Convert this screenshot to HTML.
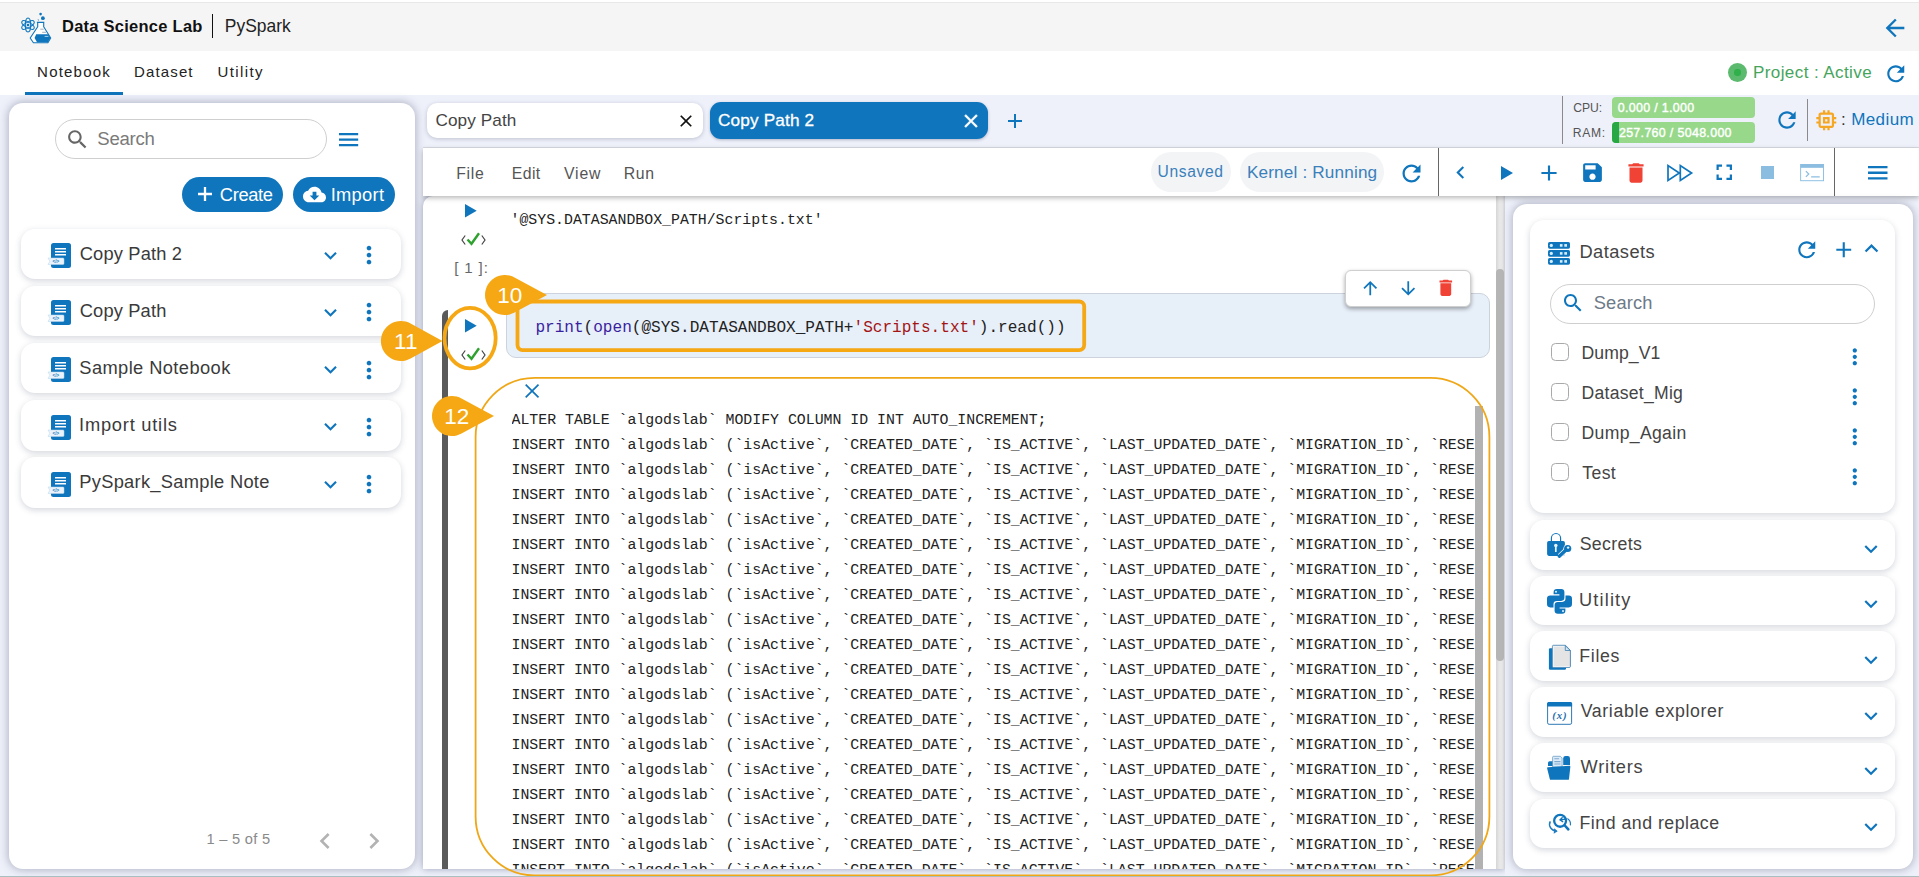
<!DOCTYPE html>
<html lang="en">
<head>
<meta charset="utf-8">
<title>Data Science Lab | PySpark</title>
<style>
*{box-sizing:border-box;margin:0;padding:0}
html,body{width:1919px;height:877px;overflow:hidden}
body{position:relative;background:#eef1fa;font-family:"Liberation Sans",Arial,sans-serif;color:#333;-webkit-font-smoothing:antialiased}
.abs{position:absolute}
.t{position:absolute;white-space:nowrap;line-height:1;transform-origin:0 50%}
svg{position:absolute;display:block;overflow:visible}
.blue{fill:#0f75bc}
/* header */
#hdr{left:0;top:0;width:1919px;height:51px;background:#f5f5f5;border-top:2px solid #fff;box-shadow:inset 0 1px 0 #e8e8e8}
#tabsrow{left:0;top:51px;width:1919px;height:44px;background:#fff}
#tabsrow .ul{left:25px;top:41px;width:98px;height:3px;background:#0f75bc}
/* panels */
.panel{background:#fff;border-radius:14px;box-shadow:0 0 8px 1px rgba(85,90,120,.42)}
#left{left:9px;top:103px;width:406px;height:766px}
.card{position:absolute;background:#fff;border-radius:14px;box-shadow:0 2px 6px rgba(60,70,100,.22)}
.nbcard{left:21px;width:380px;height:50.400px}
.pill{position:absolute;border-radius:20px}
.btn{position:absolute;background:#0f75bc;border-radius:17.500px;height:34.800px}
#bottomstrip{left:0;top:876px;width:1919px;height:1px;background:#a9bfc0}
.nbt{font-size:18.300px;color:#3a3a3a}
.mn{top:166px;font-size:15.200px;color:#555}
.mono{font-family:"Liberation Mono","DejaVu Sans Mono",monospace}
.dsn{font-size:17.500px;color:#444}
.rct{font-size:17.800px;color:#444}
</style>
</head>
<body>
<!-- ===== HEADER ===== -->
<div id="hdr" class="abs"></div>
<div id="tabsrow" class="abs"><div class="abs ul"></div></div>
<svg id="logo" style="left:14px;top:6px" width="44" height="42" viewBox="14 6 44 42">
  <circle cx="28" cy="25" r="5.500" fill="#e6f4ff"/>
  <g fill="none" stroke="#0f75bc" stroke-width="1.050">
    <ellipse cx="28" cy="25" rx="7" ry="2.700" transform="rotate(90 28 25)"/>
    <ellipse cx="28" cy="25" rx="7" ry="2.700" transform="rotate(30 28 25)"/>
    <ellipse cx="28" cy="25" rx="7" ry="2.700" transform="rotate(-30 28 25)"/>
  </g>
  <circle cx="28" cy="25" r="1.300" class="blue"/>
  <path d="M36.900 22.400h7.400M37.700 22.400v4.400L30.200 38l3.200 4.700h14.500L50.700 38 43.700 26.800v-4.400" fill="#fff" stroke="#0f75bc" stroke-width="1.100" stroke-linejoin="round"/>
  <path d="M36.200 34.300h12.100L50.400 38l-2.600 4.200H37L34.600 38z" class="blue"/>
  <path d="M40.300 29.200h3.400M42.200 32.300h3.800" stroke="#7b8c99" stroke-width=".7"/><path d="M44.600 36.400h3.800" stroke="#cfe6f7" stroke-width=".8"/>
  <circle cx="40.600" cy="14.100" r="1.300" class="blue"/><circle cx="42.900" cy="18.200" r="1.900" class="blue"/><path d="M37.800 19.600l1.200.7" stroke="#0f75bc" stroke-width=".8"/>
</svg>
<span class="t" id="t_dsl" style="left:62.00px;top:17.65px;font-size:16.48px;font-weight:700;color:#111;letter-spacing:0.266px">Data Science Lab</span>
<div class="abs" style="left:212px;top:14px;width:1.100px;height:23.500px;background:#111"></div>
<span class="t" id="t_pys" style="left:224.76px;top:18.12px;font-size:17.46px;color:#222;letter-spacing:0.017px">PySpark</span>
<svg style="left:1881.300px;top:14.300px" width="28" height="28" viewBox="0 0 24 24"><path class="blue" d="M20 11H7.830l5.590-5.590L12 4l-8 8 8 8 1.410-1.410L7.830 13H20v-2z"/></svg>

<span class="t" id="t_nb" style="left:37.10px;top:64.00px;font-size:15.0px;color:#222;letter-spacing:1.209px">Notebook</span>
<span class="t" id="t_ds" style="left:134.10px;top:64.00px;font-size:15.0px;color:#222;letter-spacing:1.121px">Dataset</span>
<span class="t" id="t_ut" style="left:217.62px;top:64.00px;font-size:15.0px;color:#222;letter-spacing:1.375px">Utility</span>
<div class="abs" style="left:1728.100px;top:62.800px;width:19px;height:19px;border-radius:50%;background:#5cba6e"></div>
<div class="abs" style="left:1734.300px;top:69px;width:6.600px;height:6.600px;border-radius:50%;background:#2fb04a"></div>
<span class="t" id="t_proj" style="left:1752.97px;top:64.38px;font-size:17.04px;color:#45a55c;letter-spacing:0.404px">Project : Active</span>
<svg style="left:1883.250px;top:60.850px" width="25.500" height="25.500" viewBox="0 0 24 24"><path class="blue" d="M17.650 6.350C16.200 4.900 14.210 4 12 4c-4.420 0-7.990 3.580-7.990 8s3.570 8 7.990 8c3.730 0 6.840-2.550 7.730-6h-2.080c-.820 2.330-3.040 4-5.650 4-3.310 0-6-2.690-6-6s2.690-6 6-6c1.660 0 3.140.690 4.220 1.780L13 11h7V4l-2.350 2.350z"/></svg>

<!-- ===== LEFT PANEL ===== -->
<div id="left" class="abs panel"></div>
<div class="pill" style="left:55px;top:119px;width:272px;height:40px;border:1px solid #cfcfcf;background:#fff"></div>
<svg style="left:65px;top:127px" width="25" height="25" viewBox="0 0 24 24"><path fill="#666" d="M15.500 14h-.790l-.280-.270C15.410 12.590 16 11.110 16 9.500 16 5.910 13.090 3 9.500 3S3 5.910 3 9.500 5.910 16 9.500 16c1.610 0 3.090-.590 4.230-1.570l.270.280v.790l5 4.990L20.490 19l-4.990-5zm-6 0C7.010 14 5 11.990 5 9.500S7.010 5 9.500 5 14 7.010 14 9.500 11.990 14 9.500 14z"/></svg>
<span class="t" id="t_srch" style="left:97.32px;top:130.27px;font-size:18.58px;color:#7a7a7a;letter-spacing:-0.281px">Search</span>
<svg style="left:338.500px;top:132.800px" width="19.200" height="13.200" viewBox="0 0 19.200 13.200"><path class="blue" d="M0 0h19.200v2.300H0zM0 5.450h19.200v2.300H0zM0 10.900h19.200v2.300H0z"/></svg>
<div class="btn" style="left:182px;top:177px;width:101px"></div>
<svg style="left:192.600px;top:181.700px" width="24" height="24" viewBox="0 0 24 24"><path fill="#fff" d="M19 13.150h-5.850V19h-2.300v-5.850H5v-2.300h5.850V5h2.300v5.850H19z"/></svg>
<span class="t" id="t_create" style="left:219.76px;top:186.31px;font-size:18.3px;color:#fff;letter-spacing:-0.316px">Create</span>
<div class="btn" style="left:293px;top:177px;width:101.800px"></div>
<svg style="left:303px;top:183px" width="23" height="23" viewBox="0 0 24 24"><path fill="#fff" d="M19.350 10.040C18.670 6.590 15.640 4 12 4 9.110 4 6.600 5.640 5.350 8.040 2.340 8.360 0 10.910 0 14c0 3.310 2.690 6 6 6h13c2.760 0 5-2.240 5-5 0-2.640-2.050-4.780-4.650-4.960zM17 13l-5 5-5-5h3V9h4v4h3z"/></svg>
<span class="t" id="t_import" style="left:330.73px;top:186.31px;font-size:18.3px;color:#fff;letter-spacing:0.291px">Import</span>
<div class="card nbcard" style="top:228.70px"></div>
<svg style="left:48px;top:243.10px" width="24" height="26" viewBox="0 0 24 26"><rect x="3" y="0" width="20" height="25" rx="2.500" class="blue"/><path d="M7 5.800h11M7 8.800h11M7 11.800h11" stroke="#fff" stroke-width="1.600"/><path d="M0 15h15a1 1 0 0 1 1 1v4.500a1 1 0 0 1-1 1H0l1.800-3.250z" fill="#eaf3fb" stroke="#b9d6ee" stroke-width=".5"/><text x="4.500" y="20.300" font-family="Liberation Sans, sans-serif" font-size="4.500" font-weight="700" fill="#0f75bc">&lt;/&gt;</text></svg>
<span id="a1" class="t nbt" style="left:79.74px;top:245.41px;font-size:18.3px;letter-spacing:0.159px">Copy Path 2</span>
<svg style="left:318.100px;top:242.90px" width="25" height="25" viewBox="0 0 24 24"><path class="blue" d="M16.590 8.590L12 13.170 7.410 8.590 6 10l6 6 6-6z"/></svg>
<svg style="left:354.800px;top:241.20px" width="28" height="28" viewBox="0 0 24 24"><path class="blue" d="M12 8c1.100 0 2-.900 2-2s-.900-2-2-2-2 .900-2 2 .900 2 2 2zm0 2c-1.100 0-2 .900-2 2s.900 2 2 2 2-.900 2-2-.900-2-2-2zm0 6c-1.100 0-2 .900-2 2s.900 2 2 2 2-.900 2-2-.900-2-2-2z"/></svg>
<div class="card nbcard" style="top:285.85px"></div>
<svg style="left:48px;top:300.25px" width="24" height="26" viewBox="0 0 24 26"><rect x="3" y="0" width="20" height="25" rx="2.500" class="blue"/><path d="M7 5.800h11M7 8.800h11M7 11.800h11" stroke="#fff" stroke-width="1.600"/><path d="M0 15h15a1 1 0 0 1 1 1v4.500a1 1 0 0 1-1 1H0l1.800-3.250z" fill="#eaf3fb" stroke="#b9d6ee" stroke-width=".5"/><text x="4.500" y="20.300" font-family="Liberation Sans, sans-serif" font-size="4.500" font-weight="700" fill="#0f75bc">&lt;/&gt;</text></svg>
<span id="a2" class="t nbt" style="left:79.74px;top:302.41px;font-size:18.3px;letter-spacing:0.156px">Copy Path</span>
<svg style="left:318.100px;top:300.05px" width="25" height="25" viewBox="0 0 24 24"><path class="blue" d="M16.590 8.590L12 13.170 7.410 8.590 6 10l6 6 6-6z"/></svg>
<svg style="left:354.800px;top:298.35px" width="28" height="28" viewBox="0 0 24 24"><path class="blue" d="M12 8c1.100 0 2-.900 2-2s-.900-2-2-2-2 .900-2 2 .900 2 2 2zm0 2c-1.100 0-2 .900-2 2s.900 2 2 2 2-.900 2-2-.900-2-2-2zm0 6c-1.100 0-2 .900-2 2s.900 2 2 2 2-.900 2-2-.900-2-2-2z"/></svg>
<div class="card nbcard" style="top:343.00px"></div>
<svg style="left:48px;top:357.40px" width="24" height="26" viewBox="0 0 24 26"><rect x="3" y="0" width="20" height="25" rx="2.500" class="blue"/><path d="M7 5.800h11M7 8.800h11M7 11.800h11" stroke="#fff" stroke-width="1.600"/><path d="M0 15h15a1 1 0 0 1 1 1v4.500a1 1 0 0 1-1 1H0l1.800-3.250z" fill="#eaf3fb" stroke="#b9d6ee" stroke-width=".5"/><text x="4.500" y="20.300" font-family="Liberation Sans, sans-serif" font-size="4.500" font-weight="700" fill="#0f75bc">&lt;/&gt;</text></svg>
<span id="a3" class="t nbt" style="left:79.29px;top:359.41px;font-size:18.3px;letter-spacing:0.405px">Sample Notebook</span>
<svg style="left:318.100px;top:357.20px" width="25" height="25" viewBox="0 0 24 24"><path class="blue" d="M16.590 8.590L12 13.170 7.410 8.590 6 10l6 6 6-6z"/></svg>
<svg style="left:354.800px;top:355.50px" width="28" height="28" viewBox="0 0 24 24"><path class="blue" d="M12 8c1.100 0 2-.900 2-2s-.900-2-2-2-2 .900-2 2 .900 2 2 2zm0 2c-1.100 0-2 .900-2 2s.900 2 2 2 2-.900 2-2-.900-2-2-2zm0 6c-1.100 0-2 .900-2 2s.900 2 2 2 2-.900 2-2-.900-2-2-2z"/></svg>
<div class="card nbcard" style="top:400.15px"></div>
<svg style="left:48px;top:414.55px" width="24" height="26" viewBox="0 0 24 26"><rect x="3" y="0" width="20" height="25" rx="2.500" class="blue"/><path d="M7 5.800h11M7 8.800h11M7 11.800h11" stroke="#fff" stroke-width="1.600"/><path d="M0 15h15a1 1 0 0 1 1 1v4.500a1 1 0 0 1-1 1H0l1.800-3.250z" fill="#eaf3fb" stroke="#b9d6ee" stroke-width=".5"/><text x="4.500" y="20.300" font-family="Liberation Sans, sans-serif" font-size="4.500" font-weight="700" fill="#0f75bc">&lt;/&gt;</text></svg>
<span id="a4" class="t nbt" style="left:79.12px;top:416.41px;font-size:18.3px;letter-spacing:0.761px">Import utils</span>
<svg style="left:318.100px;top:414.35px" width="25" height="25" viewBox="0 0 24 24"><path class="blue" d="M16.590 8.590L12 13.170 7.410 8.590 6 10l6 6 6-6z"/></svg>
<svg style="left:354.800px;top:412.65px" width="28" height="28" viewBox="0 0 24 24"><path class="blue" d="M12 8c1.100 0 2-.900 2-2s-.900-2-2-2-2 .900-2 2 .900 2 2 2zm0 2c-1.100 0-2 .900-2 2s.900 2 2 2 2-.900 2-2-.900-2-2-2zm0 6c-1.100 0-2 .900-2 2s.900 2 2 2 2-.900 2-2-.900-2-2-2z"/></svg>
<div class="card nbcard" style="top:457.30px"></div>
<svg style="left:48px;top:471.70px" width="24" height="26" viewBox="0 0 24 26"><rect x="3" y="0" width="20" height="25" rx="2.500" class="blue"/><path d="M7 5.800h11M7 8.800h11M7 11.800h11" stroke="#fff" stroke-width="1.600"/><path d="M0 15h15a1 1 0 0 1 1 1v4.500a1 1 0 0 1-1 1H0l1.800-3.250z" fill="#eaf3fb" stroke="#b9d6ee" stroke-width=".5"/><text x="4.500" y="20.300" font-family="Liberation Sans, sans-serif" font-size="4.500" font-weight="700" fill="#0f75bc">&lt;/&gt;</text></svg>
<span id="a5" class="t nbt" style="left:79.26px;top:473.41px;font-size:18.3px;letter-spacing:0.289px">PySpark_Sample Note</span>
<svg style="left:318.100px;top:471.50px" width="25" height="25" viewBox="0 0 24 24"><path class="blue" d="M16.590 8.590L12 13.170 7.410 8.590 6 10l6 6 6-6z"/></svg>
<svg style="left:354.800px;top:469.80px" width="28" height="28" viewBox="0 0 24 24"><path class="blue" d="M12 8c1.100 0 2-.900 2-2s-.900-2-2-2-2 .900-2 2 .900 2 2 2zm0 2c-1.100 0-2 .900-2 2s.900 2 2 2 2-.900 2-2-.900-2-2-2zm0 6c-1.100 0-2 .900-2 2s.900 2 2 2 2-.900 2-2-.900-2-2-2z"/></svg>
<span class="t" id="t_pag" style="left:206.53px;top:831.84px;font-size:14.66px;color:#8a8a8a;letter-spacing:0.272px">1 – 5 of 5</span>
<svg style="left:308.600px;top:825.200px" width="32" height="32" viewBox="0 0 24 24"><path fill="#b3b3b3" d="M15.410 7.410L14 6l-6 6 6 6 1.410-1.410L10.830 12z"/></svg>
<svg style="left:358.400px;top:825.200px" width="32" height="32" viewBox="0 0 24 24"><path fill="#b3b3b3" d="M10 6L8.590 7.410 13.170 12l-4.580 4.590L10 18l6-6z"/></svg>

<!-- ===== CENTER: file tabs ===== -->
<div class="abs" style="left:427px;top:103px;width:276px;height:35px;background:#fff;border-radius:10px;box-shadow:0 1px 4px rgba(60,70,100,.28)"></div>
<span class="t" id="t_tab1" style="left:435.49px;top:112.46px;font-size:17.18px;color:#444;letter-spacing:0.086px">Copy Path</span>
<svg style="left:676px;top:110.500px" width="20" height="20" viewBox="0 0 24 24"><path fill="#111" d="M19 6.410L17.590 5 12 10.590 6.410 5 5 6.410 10.590 12 5 17.590 6.410 19 12 13.410 17.590 19 19 17.590 13.410 12z"/></svg>
<div class="abs" style="left:710px;top:102px;width:278px;height:37px;background:#0f75bc;border-radius:11px;box-shadow:0 1px 3px rgba(30,40,80,.3)"></div>
<span class="t" id="t_tab2" style="left:717.94px;top:112.46px;font-size:17.18px;color:#fff;letter-spacing:0.170px;-webkit-text-stroke:.3px #fff">Copy Path 2</span>
<svg style="left:959.500px;top:110px" width="22" height="22" viewBox="0 0 24 24"><path fill="#fff" stroke="#fff" stroke-width=".6" d="M19 6.410L17.590 5 12 10.590 6.410 5 5 6.410 10.590 12 5 17.590 6.410 19 12 13.410 17.590 19 19 17.590 13.410 12z"/></svg>
<svg style="left:1002.500px;top:109px" width="24" height="24" viewBox="0 0 24 24"><path class="blue" d="M19 13h-6v6h-2v-6H5v-2h6V5h2v6h6v2z"/></svg>
<!-- resources -->
<div class="abs" style="left:1562px;top:96px;width:1px;height:48px;background:#8a8a8a"></div>
<span class="t" id="t_cpu" style="left:1573.21px;top:101.82px;font-size:12.15px;color:#555;letter-spacing:-0.018px">CPU:</span>
<span class="t" id="t_ram" style="left:1572.69px;top:126.62px;font-size:12.15px;color:#555;letter-spacing:0.721px">RAM:</span>
<div class="abs" style="left:1612px;top:97px;width:143px;height:21px;border-radius:4px;background:#98d88b"></div>
<div class="abs" style="left:1612px;top:122px;width:143px;height:21px;border-radius:4px;background:#98d88b;overflow:hidden"><div style="width:7px;height:21px;background:#28a745"></div></div>
<span class="t" id="t_cpuv" style="left:1617.76px;top:101.58px;font-size:12.43px;color:#fff;font-weight:400;-webkit-text-stroke:.4px #fff;letter-spacing:0.328px">0.000 / 1.000</span>
<span class="t" id="t_ramv" style="left:1618.90px;top:127.38px;font-size:12.43px;color:#fff;font-weight:400;-webkit-text-stroke:.4px #fff;letter-spacing:0.328px">257.760 / 5048.000</span>
<svg style="left:1773.600px;top:107.300px" width="26" height="26" viewBox="0 0 24 24"><path class="blue" d="M17.650 6.350C16.200 4.900 14.210 4 12 4c-4.420 0-7.990 3.580-7.990 8s3.570 8 7.990 8c3.730 0 6.840-2.550 7.730-6h-2.080c-.820 2.330-3.040 4-5.650 4-3.310 0-6-2.690-6-6s2.690-6 6-6c1.660 0 3.140.690 4.220 1.780L13 11h7V4l-2.350 2.350z"/></svg>
<div class="abs" style="left:1807px;top:99px;width:1px;height:42px;background:#8a8a8a"></div>
<svg style="left:1813px;top:106.800px" width="26.600" height="26.600" viewBox="0 0 24 24"><path fill="#f5a623" d="M15 9H9v6h6V9zm-2 4h-2v-2h2v2zm8-2V9h-2V7c0-1.100-.900-2-2-2h-2V3h-2v2h-2V3H9v2H7c-1.100 0-2 .900-2 2v2H3v2h2v2H3v2h2v2c0 1.100.900 2 2 2h2v2h2v-2h2v2h2v-2h2c1.100 0 2-.900 2-2v-2h2v-2h-2v-2h2zm-4 6H7V7h10v10z"/></svg>
<span class="t" id="t_med" style="left:1840.96px;top:111.08px;font-size:17.04px;color:#0f75bc;letter-spacing:0.382px"><span style="color:#333">:</span> Medium</span>
<!-- toolbar -->
<div class="abs" style="left:405px;top:180px;width:1099.500px;height:697px;overflow:hidden"><div class="abs" id="nbarea" style="left:18px;top:16px;width:1081.500px;height:673px;background:#fff;border-radius:10px 0 0 0;box-shadow:0 0 7px rgba(70,80,120,.5)"></div></div>
<div class="abs" style="left:1496px;top:196px;width:8.500px;height:673px;background:linear-gradient(90deg,#d6d6d6,#e8e8e8 40%,#e6e6e6 70%,#cfd0d6)"></div>
<div class="abs" style="left:1496px;top:269px;width:7.700px;height:391.500px;background:#b5b5b5;border-radius:4px"></div>
<div class="abs" id="toolbar" style="left:423px;top:148px;width:1496px;height:48px;background:#fff;box-shadow:0 2px 5px rgba(0,0,0,.28),0 -1px 0 #d8dbe2"></div>
<span id="a6" class="t mn" style="left:456.23px;font-size:15.8px;top:165.83px;letter-spacing:0.696px">File</span>
<span id="a7" class="t mn" style="left:511.77px;font-size:15.8px;top:165.83px;letter-spacing:0.418px">Edit</span>
<span id="a8" class="t mn" style="left:564.00px;font-size:15.8px;top:165.83px;letter-spacing:0.849px">View</span>
<span id="a9" class="t mn" style="left:623.77px;font-size:15.8px;top:165.83px;letter-spacing:0.656px">Run</span>
<div class="pill" style="left:1150.500px;top:152px;width:80px;height:40px;background:#f3f4f6"></div>
<span class="t" id="t_uns" style="left:1157.58px;top:163.76px;font-size:15.64px;color:#3a80bb;letter-spacing:0.614px">Unsaved</span>
<div class="pill" style="left:1239.500px;top:152px;width:144px;height:40px;background:#f3f4f6"></div>
<span class="t" id="t_ker" style="left:1246.91px;top:164.26px;font-size:17.18px;color:#3a80bb;letter-spacing:0.155px">Kernel : Running</span>
<svg style="left:1398px;top:160px" width="27" height="27" viewBox="0 0 24 24"><path class="blue" d="M17.650 6.350C16.200 4.900 14.210 4 12 4c-4.420 0-7.990 3.580-7.990 8s3.570 8 7.990 8c3.730 0 6.840-2.550 7.730-6h-2.080c-.820 2.330-3.040 4-5.650 4-3.310 0-6-2.690-6-6s2.690-6 6-6c1.660 0 3.140.690 4.220 1.780L13 11h7V4l-2.350 2.350z"/></svg>
<div class="abs" style="left:1438px;top:148px;width:1px;height:48px;background:#666"></div>
<svg style="left:1448px;top:160px" width="25" height="25" viewBox="0 0 24 24"><path class="blue" d="M15.410 7.410L14 6l-6 6 6 6 1.410-1.410L10.830 12z"/></svg>
<svg style="left:1500.700px;top:165.500px" width="12" height="14" viewBox="0 0 12 14"><path class="blue" d="M0 0v14l12-7z"/></svg>
<svg style="left:1535.500px;top:159.500px" width="26" height="26" viewBox="0 0 24 24"><path class="blue" d="M19 13h-6v6h-2v-6H5v-2h6V5h2v6h6v2z"/></svg>
<svg style="left:1580px;top:160px" width="25" height="25" viewBox="0 0 24 24"><path class="blue" d="M17 3H5c-1.110 0-2 .900-2 2v14c0 1.100.890 2 2 2h14c1.100 0 2-.900 2-2V7l-4-4zm-5 16c-1.660 0-3-1.340-3-3s1.340-3 3-3 3 1.340 3 3-1.340 3-3 3zm3-10H5V5h10v4z"/></svg>
<svg style="left:1623px;top:159.500px" width="26" height="26" viewBox="0 0 24 24"><path fill="#f04235" d="M6 19c0 1.100.900 2 2 2h8c1.100 0 2-.900 2-2V7H6v12zM19 4h-3.500l-1-1h-5l-1 1H5v2h14V4z"/></svg>
<svg style="left:1667px;top:163.500px" width="26" height="18" viewBox="0 0 26 18"><path d="M1 1.600v14.800l11.300-7.400zM13.300 1.600v14.800l11.300-7.400z" fill="none" stroke="#0f75bc" stroke-width="1.700" stroke-linejoin="miter"/></svg>
<svg style="left:1710.500px;top:159.200px" width="26.500" height="26.500" viewBox="0 0 24 24"><path class="blue" d="M7 14H5v5h5v-2H7v-3zm-2-4h2V7h3V5H5v5zm12 7h-3v2h5v-5h-2v3zM14 5v2h3v3h2V5h-5z"/></svg>
<div class="abs" style="left:1761px;top:166px;width:13px;height:13px;background:#8bbde1"></div>
<svg style="left:1799.500px;top:163.700px" width="24.200" height="17.200" viewBox="0 0 25 18"><rect x=".5" y=".5" width="24" height="17" fill="#fff" stroke="#8bbde1"/><rect x=".5" y=".5" width="24" height="3.500" fill="#8bbde1"/><path d="M6 7.500l3 3-3 3M11.500 13.500h9" fill="none" stroke="#8bbde1" stroke-width="1.300"/></svg>
<div class="abs" style="left:1833.500px;top:148px;width:1px;height:48px;background:#666"></div>
<svg style="left:1867.700px;top:166px" width="19.500" height="13.500" viewBox="0 0 19.500 13.500"><path class="blue" d="M0 0h19.500v2.300H0zM0 5.600h19.500v2.300H0zM0 11.200h19.500v2.300H0z"/></svg>
<!-- ===== CELLS ===== -->
<svg style="left:465.300px;top:204px" width="12" height="14" viewBox="0 0 12 14"><path class="blue" d="M0 0v13.500l11.700-6.750z"/></svg>
<svg style="left:460.5px;top:232px" width="25" height="14" viewBox="0 0 25 14"><path d="M4.200 3.500L1 8l3.200 4.500M20.800 3.500L24 8l-3.200 4.500" fill="none" stroke="#444" stroke-width="1.200"/><path d="M6.500 7.500l4 4.300L18 1.200" fill="none" stroke="#2ea12e" stroke-width="2.400"/></svg>
<span class="t mono" id="t_out1" style="left:510.500px;top:213.200px;font-size:14.862px;color:#222">'@SYS.DATASANDBOX_PATH/Scripts.txt'</span>
<span class="t" id="t_in1" style="left:454.15px;top:259.53px;font-size:15.08px;color:#666;letter-spacing:0.870px">[ 1 ]:</span>
<div class="abs" style="left:442px;top:310px;width:6px;height:559px;background:#5a5a5a;border-radius:6px 0 0 0"></div>
<div class="abs" style="left:505.500px;top:292.500px;width:984px;height:65.500px;background:#e7eff9;border:1px solid #cdd3dc;border-radius:10px"></div>
<svg style="left:510px;top:295px" width="582" height="62" viewBox="510 295 582 62"><rect x="517.500" y="301.500" width="566.700" height="48.600" rx="5" fill="none" stroke="#f5a814" stroke-width="3.800"/></svg>
<span class="t mono" id="t_code" style="left:535.400px;top:320.200px;font-size:16.070px;color:#222"><span style="color:#3a1f9e">print</span>(<span style="color:#3a1f9e">open</span>(@SYS.DATASANDBOX_PATH+<span style="color:#a31515">'Scripts.txt'</span>).read())</span>
<svg style="left:465px;top:318.700px" width="12" height="14" viewBox="0 0 12 14"><path class="blue" d="M0 0v13.500l11.700-6.750z"/></svg>
<svg style="left:460.5px;top:347px" width="25" height="14" viewBox="0 0 25 14"><path d="M4.200 3.500L1 8l3.200 4.500M20.800 3.500L24 8l-3.200 4.500" fill="none" stroke="#444" stroke-width="1.200"/><path d="M6.500 7.500l4 4.300L18 1.200" fill="none" stroke="#2ea12e" stroke-width="2.400"/></svg>
<svg style="left:440px;top:302px" width="62" height="74" viewBox="440 302 62 74"><ellipse cx="470.100" cy="338.100" rx="25.600" ry="30.200" fill="none" stroke="#f5a814" stroke-width="3.800"/></svg>
<div class="abs" style="left:1344.500px;top:270px;width:126px;height:36.500px;background:#fff;border:1px solid #cfcfcf;border-radius:6px;box-shadow:0 2px 4px rgba(0,0,0,.35)"></div>
<svg style="left:1363px;top:280.500px" width="14.500" height="14.500" viewBox="0 0 14 14"><path d="M7 13.800V1.200M1 7.200l6-6 6 6" fill="none" stroke="#0f75bc" stroke-width="1.700"/></svg>
<svg style="left:1400.500px;top:280.500px" width="14.500" height="14.500" viewBox="0 0 14 14"><path d="M7 .2v12.600M1 6.800l6 6 6-6" fill="none" stroke="#0f75bc" stroke-width="1.700"/></svg>
<svg style="left:1434.600px;top:276.500px" width="21.600" height="21.600" viewBox="0 0 24 24"><path fill="#f04235" d="M6 19c0 1.100.900 2 2 2h8c1.100 0 2-.900 2-2V7H6v12zM19 4h-3.500l-1-1h-5l-1 1H5v2h14V4z"/></svg>
<div class="abs mono" id="outbox" style="left:511.500px;top:408px;width:963.300px;height:461px;overflow:hidden;font-size:14.862px;line-height:25px;color:#222;white-space:pre">ALTER TABLE `algodslab` MODIFY COLUMN ID INT AUTO_INCREMENT;
INSERT INTO `algodslab` (`isActive`, `CREATED_DATE`, `IS_ACTIVE`, `LAST_UPDATED_DATE`, `MIGRATION_ID`, `RESERVED`
INSERT INTO `algodslab` (`isActive`, `CREATED_DATE`, `IS_ACTIVE`, `LAST_UPDATED_DATE`, `MIGRATION_ID`, `RESERVED`
INSERT INTO `algodslab` (`isActive`, `CREATED_DATE`, `IS_ACTIVE`, `LAST_UPDATED_DATE`, `MIGRATION_ID`, `RESERVED`
INSERT INTO `algodslab` (`isActive`, `CREATED_DATE`, `IS_ACTIVE`, `LAST_UPDATED_DATE`, `MIGRATION_ID`, `RESERVED`
INSERT INTO `algodslab` (`isActive`, `CREATED_DATE`, `IS_ACTIVE`, `LAST_UPDATED_DATE`, `MIGRATION_ID`, `RESERVED`
INSERT INTO `algodslab` (`isActive`, `CREATED_DATE`, `IS_ACTIVE`, `LAST_UPDATED_DATE`, `MIGRATION_ID`, `RESERVED`
INSERT INTO `algodslab` (`isActive`, `CREATED_DATE`, `IS_ACTIVE`, `LAST_UPDATED_DATE`, `MIGRATION_ID`, `RESERVED`
INSERT INTO `algodslab` (`isActive`, `CREATED_DATE`, `IS_ACTIVE`, `LAST_UPDATED_DATE`, `MIGRATION_ID`, `RESERVED`
INSERT INTO `algodslab` (`isActive`, `CREATED_DATE`, `IS_ACTIVE`, `LAST_UPDATED_DATE`, `MIGRATION_ID`, `RESERVED`
INSERT INTO `algodslab` (`isActive`, `CREATED_DATE`, `IS_ACTIVE`, `LAST_UPDATED_DATE`, `MIGRATION_ID`, `RESERVED`
INSERT INTO `algodslab` (`isActive`, `CREATED_DATE`, `IS_ACTIVE`, `LAST_UPDATED_DATE`, `MIGRATION_ID`, `RESERVED`
INSERT INTO `algodslab` (`isActive`, `CREATED_DATE`, `IS_ACTIVE`, `LAST_UPDATED_DATE`, `MIGRATION_ID`, `RESERVED`
INSERT INTO `algodslab` (`isActive`, `CREATED_DATE`, `IS_ACTIVE`, `LAST_UPDATED_DATE`, `MIGRATION_ID`, `RESERVED`
INSERT INTO `algodslab` (`isActive`, `CREATED_DATE`, `IS_ACTIVE`, `LAST_UPDATED_DATE`, `MIGRATION_ID`, `RESERVED`
INSERT INTO `algodslab` (`isActive`, `CREATED_DATE`, `IS_ACTIVE`, `LAST_UPDATED_DATE`, `MIGRATION_ID`, `RESERVED`
INSERT INTO `algodslab` (`isActive`, `CREATED_DATE`, `IS_ACTIVE`, `LAST_UPDATED_DATE`, `MIGRATION_ID`, `RESERVED`
INSERT INTO `algodslab` (`isActive`, `CREATED_DATE`, `IS_ACTIVE`, `LAST_UPDATED_DATE`, `MIGRATION_ID`, `RESERVED`
INSERT INTO `algodslab` (`isActive`, `CREATED_DATE`, `IS_ACTIVE`, `LAST_UPDATED_DATE`, `MIGRATION_ID`, `RESERVED`</div>
<div class="abs" style="left:1475px;top:405.500px;width:7.700px;height:463.500px;background:#b2b2b2"></div>
<svg style="left:524.500px;top:383.500px" width="14.200" height="14" viewBox="0 0 14 14"><path d="M.6.600l12.800 12.800M13.400.600L.6 13.400" fill="none" stroke="#0f75bc" stroke-width="1.700"/></svg>
<svg style="left:470px;top:372px" width="1026" height="505" viewBox="470 372 1026 505"><rect x="475.600" y="377.900" width="1013.800" height="497.500" rx="59" fill="none" stroke="#efa718" stroke-width="1.800"/></svg>
<svg style="left:0;top:0" width="1919" height="877" viewBox="0 0 1919 877"><path fill="#f5a814" d="M547 295L514.5 277.4A20 20 0 1 0 514.5 312.6Z"/><text x="509.8" y="303.1" text-anchor="middle" font-family="Liberation Sans, Arial, sans-serif" font-size="22.500" fill="#fff">10</text></svg>
<svg style="left:0;top:0" width="1919" height="877" viewBox="0 0 1919 877"><path fill="#f5a814" d="M442.5 341L410.6 323.5A20 20 0 1 0 410.6 358.5Z"/><text x="405.8" y="349.1" text-anchor="middle" font-family="Liberation Sans, Arial, sans-serif" font-size="22.500" fill="#fff">11</text></svg>
<svg style="left:0;top:0" width="1919" height="877" viewBox="0 0 1919 877"><path fill="#f5a814" d="M494 416L461.5 398.4A20 20 0 1 0 461.5 433.6Z"/><text x="456.8" y="424.1" text-anchor="middle" font-family="Liberation Sans, Arial, sans-serif" font-size="22.500" fill="#fff">12</text></svg>


<!-- ===== RIGHT PANEL ===== -->
<div class="abs panel" style="left:1513px;top:204px;width:400px;height:665px"></div>
<div class="card" style="left:1530px;top:220px;width:365px;height:293px"></div>
<svg style="left:1548px;top:242px" width="22" height="23" viewBox="0 0 22 23"><g class="blue"><rect x="0" y="0" width="22" height="6.700" rx="1.600"/><rect x="0" y="8" width="22" height="6.700" rx="1.600"/><rect x="0" y="16" width="22" height="6.700" rx="1.600"/></g><g fill="#d9efff"><circle cx="3.300" cy="3.4" r="1.600"/><rect x="11.900" y="2.1" width="2.600" height="2.600"/><rect x="16.300" y="2.1" width="2.700" height="2.600"/><circle cx="3.300" cy="11.4" r="1.600"/><rect x="11.900" y="10.1" width="2.600" height="2.600"/><rect x="16.300" y="10.1" width="2.700" height="2.600"/><circle cx="3.300" cy="19.4" r="1.600"/><rect x="11.900" y="18.1" width="2.600" height="2.600"/><rect x="16.300" y="18.1" width="2.700" height="2.600"/></g></svg>
<span class="t" id="t_dsets" style="left:1579.38px;top:242.71px;font-size:18.3px;color:#444;letter-spacing:0.450px">Datasets</span>
<svg style="left:1794px;top:236.500px" width="25.500" height="25.500" viewBox="0 0 24 24"><path class="blue" d="M17.650 6.350C16.200 4.900 14.210 4 12 4c-4.420 0-7.990 3.580-7.990 8s3.570 8 7.990 8c3.730 0 6.840-2.550 7.730-6h-2.080c-.820 2.330-3.040 4-5.650 4-3.310 0-6-2.690-6-6s2.690-6 6-6c1.660 0 3.140.690 4.220 1.780L13 11h7V4l-2.350 2.350z"/></svg>
<svg style="left:1831px;top:236.500px" width="25.500" height="25.500" viewBox="0 0 24 24"><path class="blue" d="M19 13h-6v6h-2v-6H5v-2h6V5h2v6h6v2z"/></svg>
<svg style="left:1857.500px;top:235px" width="27" height="27" viewBox="0 0 24 24"><path class="blue" d="M12 8l-6 6 1.410 1.410L12 10.830l4.590 4.580L18 14z"/></svg>
<div class="pill" style="left:1550px;top:284px;width:325px;height:39.500px;border:1px solid #cfcfcf;background:#fff"></div>
<svg style="left:1561px;top:291px" width="24" height="24" viewBox="0 0 24 24"><path class="blue" d="M15.500 14h-.790l-.280-.270C15.410 12.590 16 11.110 16 9.500 16 5.910 13.090 3 9.500 3S3 5.910 3 9.500 5.910 16 9.500 16c1.610 0 3.090-.590 4.230-1.570l.270.280v.790l5 4.990L20.490 19l-4.990-5zm-6 0C7.010 14 5 11.990 5 9.500S7.010 5 9.500 5 14 7.010 14 9.500 11.990 14 9.500 14z"/></svg>
<span class="t" id="t_srch2" style="left:1593.74px;top:293.51px;font-size:18.3px;color:#6d7a88;letter-spacing:0.167px">Search</span>
<div class="abs" style="left:1551px;top:343px;width:18px;height:18px;border:1px solid #a9a9a9;border-radius:4.500px;background:#fff"></div>
<span id="a10" class="t dsn" style="left:1581.56px;top:344.90px;font-size:17.6px;letter-spacing:0.084px">Dump_V1</span>
<svg style="left:1842.200px;top:343.8px" width="25.600" height="25.600" viewBox="0 0 24 24"><path class="blue" d="M12 8c1.100 0 2-.900 2-2s-.900-2-2-2-2 .900-2 2 .900 2 2 2zm0 2c-1.100 0-2 .900-2 2s.900 2 2 2 2-.900 2-2-.900-2-2-2zm0 6c-1.100 0-2 .900-2 2s.900 2 2 2 2-.900 2-2-.900-2-2-2z"/></svg>
<div class="abs" style="left:1551px;top:383px;width:18px;height:18px;border:1px solid #a9a9a9;border-radius:4.500px;background:#fff"></div>
<span id="a11" class="t dsn" style="left:1581.56px;top:384.90px;font-size:17.6px;letter-spacing:0.254px">Dataset_Mig</span>
<svg style="left:1842.200px;top:383.8px" width="25.600" height="25.600" viewBox="0 0 24 24"><path class="blue" d="M12 8c1.100 0 2-.900 2-2s-.900-2-2-2-2 .900-2 2 .900 2 2 2zm0 2c-1.100 0-2 .900-2 2s.900 2 2 2 2-.900 2-2-.900-2-2-2zm0 6c-1.100 0-2 .900-2 2s.900 2 2 2 2-.900 2-2-.900-2-2-2z"/></svg>
<div class="abs" style="left:1551px;top:423px;width:18px;height:18px;border:1px solid #a9a9a9;border-radius:4.500px;background:#fff"></div>
<span id="a12" class="t dsn" style="left:1581.56px;top:424.90px;font-size:17.6px;letter-spacing:0.328px">Dump_Again</span>
<svg style="left:1842.200px;top:423.8px" width="25.600" height="25.600" viewBox="0 0 24 24"><path class="blue" d="M12 8c1.100 0 2-.900 2-2s-.900-2-2-2-2 .900-2 2 .900 2 2 2zm0 2c-1.100 0-2 .900-2 2s.900 2 2 2 2-.900 2-2-.900-2-2-2zm0 6c-1.100 0-2 .900-2 2s.900 2 2 2 2-.900 2-2-.900-2-2-2z"/></svg>
<div class="abs" style="left:1551px;top:463px;width:18px;height:18px;border:1px solid #a9a9a9;border-radius:4.500px;background:#fff"></div>
<span id="a13" class="t dsn" style="left:1582.26px;top:464.90px;font-size:17.6px;letter-spacing:0.404px">Test</span>
<svg style="left:1842.200px;top:463.8px" width="25.600" height="25.600" viewBox="0 0 24 24"><path class="blue" d="M12 8c1.100 0 2-.900 2-2s-.900-2-2-2-2 .900-2 2 .900 2 2 2zm0 2c-1.100 0-2 .900-2 2s.900 2 2 2 2-.900 2-2-.900-2-2-2zm0 6c-1.100 0-2 .900-2 2s.900 2 2 2 2-.900 2-2-.900-2-2-2z"/></svg>
<div class="card" style="left:1530px;top:520.0px;width:365px;height:49.600px"></div>
<svg style="left:1540px;top:526px" width="40" height="38" viewBox="1540 526 40 38"><path d="M1551.400 541.500v-3.400a4.600 4.600 0 0 1 9.200 0v3.400" fill="none" stroke="#0f75bc" stroke-width="1.150"/><rect x="1547.100" y="540.900" width="17.800" height="15" rx="1.800" class="blue"/><circle cx="1555.800" cy="545.400" r="1.750" fill="#e6f4ff"/><rect x="1554.950" y="545.400" width="1.700" height="6.600" rx=".6" fill="#e6f4ff"/><path d="M1567.600 548.600L1559.600 556" stroke="#fff" stroke-width="5" stroke-linecap="butt"/><circle cx="1567.700" cy="548.500" r="4.300" fill="#fff"/><path d="M1567.600 548.600L1559.300 556.200" stroke="#0f75bc" stroke-width="3.400" stroke-linecap="round"/><circle cx="1567.700" cy="548.500" r="3.600" class="blue"/><circle cx="1568.100" cy="547.600" r="1.200" fill="#e6f4ff"/></svg>
<span id="a14" class="t rct" style="left:1579.70px;top:535.88px;font-size:17.74px;letter-spacing:0.358px">Secrets</span>
<svg style="left:1858px;top:535.5px" width="26" height="26" viewBox="0 0 24 24"><path class="blue" d="M16.590 8.590L12 13.170 7.410 8.590 6 10l6 6 6-6z"/></svg>
<div class="card" style="left:1530px;top:575.7px;width:365px;height:49.600px"></div>
<svg style="left:1547.100px;top:589.100px" width="25" height="24.800" viewBox="0 0 25 24.800"><path class="blue" d="M6.600 5.300V3.300A3.300 3.300 0 0 1 9.900 0H14.100A3.300 3.300 0 0 1 17.400 3.300V8.600A3.300 3.300 0 0 1 14.100 11.900H9.800A3.300 3.300 0 0 0 6.500 15.200V18.400H3.300A3.300 3.300 0 0 1 0 15.100V9.700A3.300 3.300 0 0 1 3.300 6.400H12.400V5.300Z"/><circle cx="9" cy="2.750" r="1.100" fill="#cfeaff"/><g transform="rotate(180 12.500 12.400)"><path class="blue" d="M6.600 5.300V3.300A3.300 3.300 0 0 1 9.900 0H14.100A3.300 3.300 0 0 1 17.400 3.300V8.600A3.300 3.300 0 0 1 14.100 11.900H9.800A3.300 3.300 0 0 0 6.500 15.200V18.400H3.300A3.300 3.300 0 0 1 0 15.100V9.700A3.300 3.300 0 0 1 3.300 6.400H12.400V5.300Z"/><circle cx="9" cy="2.750" r="1.100" fill="#cfeaff"/></g></svg>
<span id="a15" class="t rct" style="left:1578.99px;top:591.19px;font-size:18.2px;letter-spacing:1.156px">Utility</span>
<svg style="left:1858px;top:591.2px" width="26" height="26" viewBox="0 0 24 24"><path class="blue" d="M16.590 8.590L12 13.170 7.410 8.590 6 10l6 6 6-6z"/></svg>
<div class="card" style="left:1530px;top:631.4px;width:365px;height:49.600px"></div>
<svg style="left:1540px;top:638px" width="40" height="38" viewBox="1540 638 40 38"><rect x="1548.900" y="648.200" width="17.100" height="21.600" rx="1.200" class="blue"/><path d="M1553.600 645.300h11.900l4.900 5.100v15.900a1.200 1.200 0 0 1-1.200 1.200h-15.600a1.200 1.200 0 0 1-1.200-1.200v-19.800a1.200 1.200 0 0 1 1.200-1.200z" fill="#e4e4e4" stroke="#3f7fb0" stroke-width=".9"/><path d="M1553.400 646.300h11.600M1553.300 646.300v20.400h16.300" fill="none" stroke="#f4f9fd" stroke-width=".8"/><path d="M1565.300 645.600v4.900h4.900z" fill="#cfe6f8" stroke="#3f7fb0" stroke-width=".8" stroke-linejoin="round"/></svg>
<span id="a16" class="t rct" style="left:1579.22px;top:648.28px;font-size:17.74px;letter-spacing:0.698px">Files</span>
<svg style="left:1858px;top:646.9px" width="26" height="26" viewBox="0 0 24 24"><path class="blue" d="M16.590 8.590L12 13.170 7.410 8.590 6 10l6 6 6-6z"/></svg>
<div class="card" style="left:1530px;top:687.1px;width:365px;height:49.600px"></div>
<svg style="left:1540px;top:694px" width="40" height="38" viewBox="1540 694 40 38"><rect x="1547.600" y="702.500" width="24" height="21.800" rx="1.500" fill="#fff" stroke="#2f7ab5" stroke-width="1"/><path d="M1547.100 706.600v-3.100a1.500 1.500 0 0 1 1.500-1.500h22a1.500 1.500 0 0 1 1.500 1.500v3.100z" class="blue"/><text x="1559.900" y="718.600" text-anchor="middle" font-family="Liberation Serif, serif" font-style="italic" font-weight="700" font-size="10.800" letter-spacing=".9" fill="#1f6fae">(x)</text></svg>
<span id="a17" class="t rct" style="left:1580.72px;top:702.98px;font-size:17.74px;letter-spacing:0.622px">Variable explorer</span>
<svg style="left:1858px;top:702.6px" width="26" height="26" viewBox="0 0 24 24"><path class="blue" d="M16.590 8.590L12 13.170 7.410 8.590 6 10l6 6 6-6z"/></svg>
<div class="card" style="left:1530px;top:742.8px;width:365px;height:49.600px"></div>
<svg style="left:1540px;top:749px" width="40" height="38" viewBox="1540 749 40 38"><path class="blue" d="M1548 766v-3.200a1.600 1.600 0 0 1 1.600-1.600h3.400v4.800z"/><path class="blue" d="M1563.200 765v-6.600a2.400 2.400 0 0 1 2.400-2.400h2a2.400 2.400 0 0 1 2.400 2.400v6.600z"/><path d="M1553.600 756.300h6.800l1.700 1.700v9h-9.500v-9.700a1 1 0 0 1 1-1z" fill="#dcebf8" stroke="#5b93bf" stroke-width=".7"/><path d="M1554.300 758.700h4.800M1554.300 761.600h6.200M1554.300 764h6.200" stroke="#7fa9cc" stroke-width="1.100"/><path class="blue" d="M1548 767.200l21.400-1.500a.9.900 0 0 1 .95 1l-1.350 12.200a1 1 0 0 1-1 .9h-17.200a1 1 0 0 1-1-.85l-2.700-10.700a.9.900 0 0 1 .9-1.050z"/></svg>
<span id="a18" class="t rct" style="left:1580.50px;top:758.29px;font-size:18.2px;letter-spacing:0.825px">Writers</span>
<svg style="left:1858px;top:758.3px" width="26" height="26" viewBox="0 0 24 24"><path class="blue" d="M16.590 8.590L12 13.170 7.410 8.590 6 10l6 6 6-6z"/></svg>
<div class="card" style="left:1530px;top:798.5px;width:365px;height:49.600px"></div>
<svg style="left:1540px;top:805px" width="40" height="38" viewBox="1540 805 40 38"><circle cx="1560.100" cy="820.800" r="5.950" fill="none" stroke="#0f75bc" stroke-width="2.300"/><path d="M1564.800 825.500l3.500 3.900" stroke="#0f75bc" stroke-width="2.600" stroke-linecap="round"/><path d="M1566.800 819.200l-6 .500M1562.600 817.300l-2.600 2.500 3.100 2.100" fill="none" stroke="#0f75bc" stroke-width="1.300"/><path d="M1550.300 821.300c-2.200 4.200.6 9.200 6.200 9.800" fill="none" stroke="#1f7cc0" stroke-width="1.500"/><path d="M1554.300 828.300l3.400 2.900-4 2.500z" fill="#1f7cc0"/><path d="M1567.400 818.600c2.300 1.500 3.400 3.800 3 6.700" fill="none" stroke="#1f7cc0" stroke-width="1.200"/></svg>
<span id="a19" class="t rct" style="left:1579.56px;top:815.38px;font-size:17.74px;letter-spacing:0.491px">Find and replace</span>
<svg style="left:1858px;top:814.0px" width="26" height="26" viewBox="0 0 24 24"><path class="blue" d="M16.590 8.590L12 13.170 7.410 8.590 6 10l6 6 6-6z"/></svg>

<div id="bottomstrip" class="abs"></div>
</body>
</html>
